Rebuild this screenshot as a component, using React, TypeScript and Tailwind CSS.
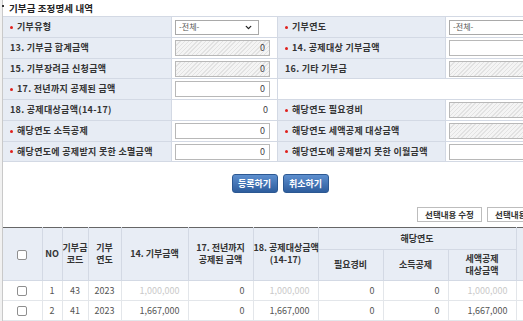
import { ChevronDown } from "lucide-react";

type Cell = { kind: "select" | "input" | "disabled" | "text" | "none"; value?: string; wide?: boolean };
type Row = { h: string; l1: string; r1?: boolean; v1: Cell; l3?: string; r3?: boolean; v3?: Cell };

const rows: Row[] = [
  { h: "h-[21px]", l1: "기부유형", r1: true, v1: { kind: "select" }, l3: "기부연도", r3: true, v3: { kind: "select", wide: true } },
  { h: "h-[21px]", l1: "13. 기부금 합계금액", v1: { kind: "disabled", value: "0" }, l3: "14. 공제대상 기부금액", r3: true, v3: { kind: "input", value: "" } },
  { h: "h-[20px]", l1: "15. 기부장려금 신청금액", v1: { kind: "disabled", value: "0" }, l3: "16. 기타 기부금", v3: { kind: "disabled", value: "" } },
  { h: "h-[21px]", l1: "17. 전년까지 공제된 금액", r1: true, v1: { kind: "input", value: "0" } },
  { h: "h-[21px]", l1: "18. 공제대상금액(14-17)", v1: { kind: "text", value: "0" }, l3: "해당연도 필요경비", r3: true, v3: { kind: "disabled", value: "" } },
  { h: "h-[21px]", l1: "해당연도 소득공제", r1: true, v1: { kind: "input", value: "0" }, l3: "해당연도 세액공제 대상금액", r3: true, v3: { kind: "disabled", value: "" } },
  { h: "h-[20px]", l1: "해당연도에 공제받지 못한 소멸금액", r1: true, v1: { kind: "input", value: "0" }, l3: "해당연도에 공제받지 못한 이월금액", r3: true, v3: { kind: "input", value: "" } },
];

const hatch =
  "bg-[image:repeating-linear-gradient(-45deg,#e2e2e2_0px,#e2e2e2_1px,#f4f4f4_1px,#f4f4f4_3px)]";

function Label({ text, req }: { text: string; req?: boolean }) {
  return (
    <div className="flex items-center gap-[4px] bg-[#e7ecf4] pl-[7px] text-[9px] font-bold tracking-[0.3px] text-[#333] whitespace-nowrap border-r border-[#d3d9e4]">
      {req && <span className="w-[3px] h-[3px] rounded-full bg-[#e0201c]" />}
      <span>{text}</span>
    </div>
  );
}

function Value({ cell }: { cell: Cell }) {
  if (cell.kind === "none") return <div />;
  if (cell.kind === "text")
    return <div className="flex items-center justify-end pr-[9px] text-[9px] text-[#444] border-r border-[#d3d9e4]">{cell.value}</div>;
  if (cell.kind === "select")
    return (
      <div className="flex items-center pl-[3px] border-r border-[#d3d9e4]">
        <div className={`flex items-center justify-between h-[15px] border border-[#a9a9a9] bg-white pl-[3px] pr-[5px] text-[8px] text-[#555] ${cell.wide ? "w-[120px]" : "w-[84px]"}`}>
          <span>-전체-</span>
          <ChevronDown size={9} strokeWidth={3.5} className="text-[#222]" />
        </div>
      </div>
    );
  return (
    <div className="flex items-center pl-[3px] border-r border-[#d3d9e4]">
      <div
        className={`flex items-center justify-end h-[16px] w-[95px] border border-[#b8b8b8] pr-[4px] text-[9px] text-[#444] ${
          cell.kind === "disabled" ? hatch : "bg-white"
        }`}
      >
        {cell.value}
      </div>
    </div>
  );
}

function Check() {
  return <span className="inline-block w-[10px] h-[10px] rounded-[2px] border border-[#8f8f8f] bg-white align-middle" />;
}

const th = "border-r border-b border-[#d3d9e4] text-[9px] font-bold text-[#333] leading-[12px] text-center whitespace-nowrap";
const td = "border-r border-b border-[#e3e6ea] text-[9px] text-[#555]";

export default function App() {
  return (
    <div className="flex w-[523px] h-[321px] overflow-hidden bg-white font-['Noto_Sans_CJK_KR','Noto_Sans',sans-serif]">
      <div className="w-[3px] shrink-0 bg-[#f1f1f1] border-r border-[#c9c9c9]" />
      <div className="w-[554px] shrink-0 flex flex-col">
        <div className="h-[18px] flex items-center">
          <span className="w-[2px] h-[2px] bg-[#333] ml-[-1px] mb-[4px]" />
          <span className="ml-[5px] text-[9.5px] font-bold text-[#222] tracking-[0.1px]">기부금 조정명세 내역</span>
        </div>

        <div className="flex flex-col border-t border-[#d3d9e4]">
          {rows.map((r, i) => (
            <div key={i} className={`grid grid-cols-[169px_106px_168px_111px] border-b border-[#d3d9e4] ${r.h}`}>
              <Label text={r.l1} req={r.r1} />
              <Value cell={r.v1} />
              {r.l3 ? <Label text={r.l3} req={r.r3} /> : <div />}
              {r.v3 ? <Value cell={r.v3} /> : <div />}
            </div>
          ))}
        </div>

        <div className="flex justify-center gap-[5px] mt-[12px]">
          {["등록하기", "취소하기"].map((t) => (
            <button
              key={t}
              className="h-[19px] w-[46px] rounded-[3px] border border-[#2c5892] bg-gradient-to-b from-[#5d8fcf] to-[#2e5d9d] text-[9px] font-bold text-white"
            >
              {t}
            </button>
          ))}
        </div>

        <div className="flex justify-end gap-[5px] pr-[5px] mt-[14px]">
          {["선택내용 수정", "선택내용 삭제"].map((t) => (
            <button key={t} className="h-[15px] w-[65px] border border-[#bdbdbd] bg-white text-[8.5px] font-bold text-[#333]">
              {t}
            </button>
          ))}
        </div>

        <table className="mt-[5px] table-fixed border-collapse border-t border-[#666] w-[554px]">
          <colgroup>
            <col className="w-[39px]" />
            <col className="w-[20px]" />
            <col className="w-[26px]" />
            <col className="w-[33px]" />
            <col className="w-[67px]" />
            <col className="w-[65px]" />
            <col className="w-[65px]" />
            <col className="w-[65px]" />
            <col className="w-[65px]" />
            <col className="w-[68px]" />
            <col className="w-[41px]" />
          </colgroup>
          <thead className="bg-[#e8edf5]">
            <tr className="h-[22px]">
              <th rowSpan={2} className={th}><Check /></th>
              <th rowSpan={2} className={th}>NO</th>
              <th rowSpan={2} className={th}>기부금<br />코드</th>
              <th rowSpan={2} className={th}>기부<br />연도</th>
              <th rowSpan={2} className={th}>14. 기부금액</th>
              <th rowSpan={2} className={th}>17. 전년까지<br />공제된 금액</th>
              <th rowSpan={2} className={th}>18. 공제대상금액<br />(14-17)</th>
              <th colSpan={3} className={th}>해당연도</th>
              <th rowSpan={2} className={th}>이월<br />금액</th>
            </tr>
            <tr className="h-[31px]">
              <th className={th}>필요경비</th>
              <th className={th}>소득공제</th>
              <th className={th}>세액공제<br />대상금액</th>
            </tr>
          </thead>
          <tbody>
            {[
              { no: "1", code: "43", y: "2023", a: "1,000,000", b: "0", c: "1,000,000", d: "0", e: "0", f: "1,000,000", faint: true },
              { no: "2", code: "41", y: "2023", a: "1,667,000", b: "0", c: "1,667,000", d: "0", e: "0", f: "1,667,000", faint: false },
            ].map((r) => (
              <tr key={r.no} className="h-[20px]">
                <td className={`${td} text-center`}><Check /></td>
                <td className={`${td} text-center`}>{r.no}</td>
                <td className={`${td} text-center`}>{r.code}</td>
                <td className={`${td} text-center`}>{r.y}</td>
                <td className={`${td} text-right pr-[8px] ${r.faint ? "text-[#c9c9c9]" : ""}`}>{r.a}</td>
                <td className={`${td} text-right pr-[8px]`}>{r.b}</td>
                <td className={`${td} text-right pr-[8px] ${r.faint ? "text-[#c9c9c9]" : ""}`}>{r.c}</td>
                <td className={`${td} text-right pr-[8px]`}>{r.d}</td>
                <td className={`${td} text-right pr-[8px]`}>{r.e}</td>
                <td className={`${td} text-right pr-[8px] ${r.faint ? "text-[#c9c9c9]" : ""}`}>{r.f}</td>
                <td className={`${td} text-right pr-[8px]`}>0</td>
              </tr>
            ))}
          </tbody>
        </table>
      </div>
    </div>
  );
}
